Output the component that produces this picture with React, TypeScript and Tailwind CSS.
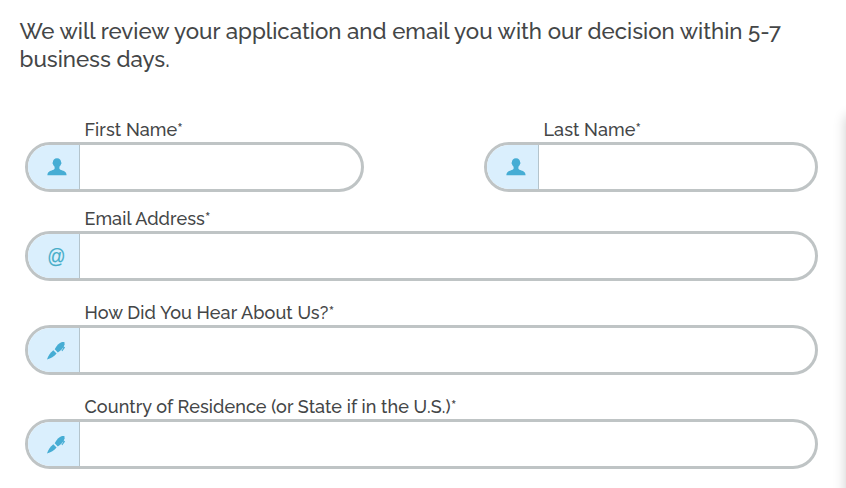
import React from 'react';

interface FieldProps {
  label: string;
  icon: React.ReactNode;
  className?: string;
}

const UserIcon = () => (
  <svg width="20" height="18" viewBox="0 0 20 18" fill="#46add4">
    <path d="M10 .2C7.300 .2 5.900 1.900 5.900 4.200c-.5.2-.5 1.300 0 1.900.3 1.200.9 2 1.700 2.700v1.900c-.4 1-1.500 1.200-2.900 1.700C2.400 13.200.5 13.700.4 17.300h19.200c-.1-3.600-2-4.100-4.300-4.900-1.400-.5-2.500-.7-2.900-1.700V8.800c.8-.7 1.400-1.500 1.700-2.700.5-.6.5-1.700 0-1.900C14.100 1.900 12.700.2 10 .2z" />
  </svg>
);

const PenIcon = () => (
  <svg width="19" height="19" viewBox="0 0 19 19" fill="#46add4">
    <path d="M0 18.400C1 15.400 3.200 11.800 6.300 9.300l3.300 3.100C7.400 15 3.600 17.500 0 18.400z" />
    <path d="M7.700 8.200C9.500 4.500 12.200 1.900 15 1l2.400-.1.200 2.600c-1 3.200-3.300 5.900-6.800 8z" />
    <path d="M16.500 5.200l1.600 1.300-2.800 3.800-.8-.6 1.900-2.900-1-.7z" />
  </svg>
);

const AtIcon = () => (
  <span className="inline-block scale-y-110 font-['Liberation_Sans',sans-serif] text-[18px] leading-5 text-[#46adc8] [-webkit-text-stroke:0.15px_#46adc8]">
    @
  </span>
);

const Field: React.FC<FieldProps> = ({ label, icon, className = '' }) => (
  <div className={className}>
    <label className="block pl-[59.5px] text-[18px] leading-6 font-medium tracking-[0.09px] whitespace-nowrap">
      {label}*
    </label>
    <div className="flex h-[50px] overflow-hidden rounded-full border-3 border-[#bfc4c5] bg-white">
      <span className="flex w-[52px] shrink-0 items-center justify-center border-r border-[#b4c4cc] bg-[#daeffd] pl-[6px]">
        {icon}
      </span>
      <input type="text" aria-label={label} className="min-w-0 flex-1 px-3 outline-none" />
    </div>
  </div>
);

const App: React.FC = () => (
  <div className="flex h-[488px] w-[846px] overflow-hidden bg-white font-['Raleway','Lato',sans-serif] text-[#444647]">
    <main className="w-[846px] shrink-0 pt-[17px] pl-5">
      <p className="-ml-[0.5px] text-[22.29px] leading-7 font-medium">
        <span className="block whitespace-nowrap">
          We will review your application and email you with our decision within 5-7
        </span>
        <span className="block">business days.</span>
      </p>
      <form className="mt-[45px] ml-[5px] w-[793px]">
        <div className="flex justify-between">
          <Field label="First Name" icon={<UserIcon />} className="w-[339px]" />
          <Field label="Last Name" icon={<UserIcon />} className="w-[334px]" />
        </div>
        <Field label="Email Address" icon={<AtIcon />} className="mt-[15px]" />
        <Field label="How Did You Hear About Us?" icon={<PenIcon />} className="mt-5" />
        <Field label="Country of Residence (or State if in the U.S.)" icon={<PenIcon />} className="mt-5" />
      </form>
    </main>
    <aside className="mt-[116px] h-[500px] w-10 shrink-0 bg-white shadow-[0_0_12px_rgba(0,0,0,0.2)]" />
  </div>
);

export default App;
